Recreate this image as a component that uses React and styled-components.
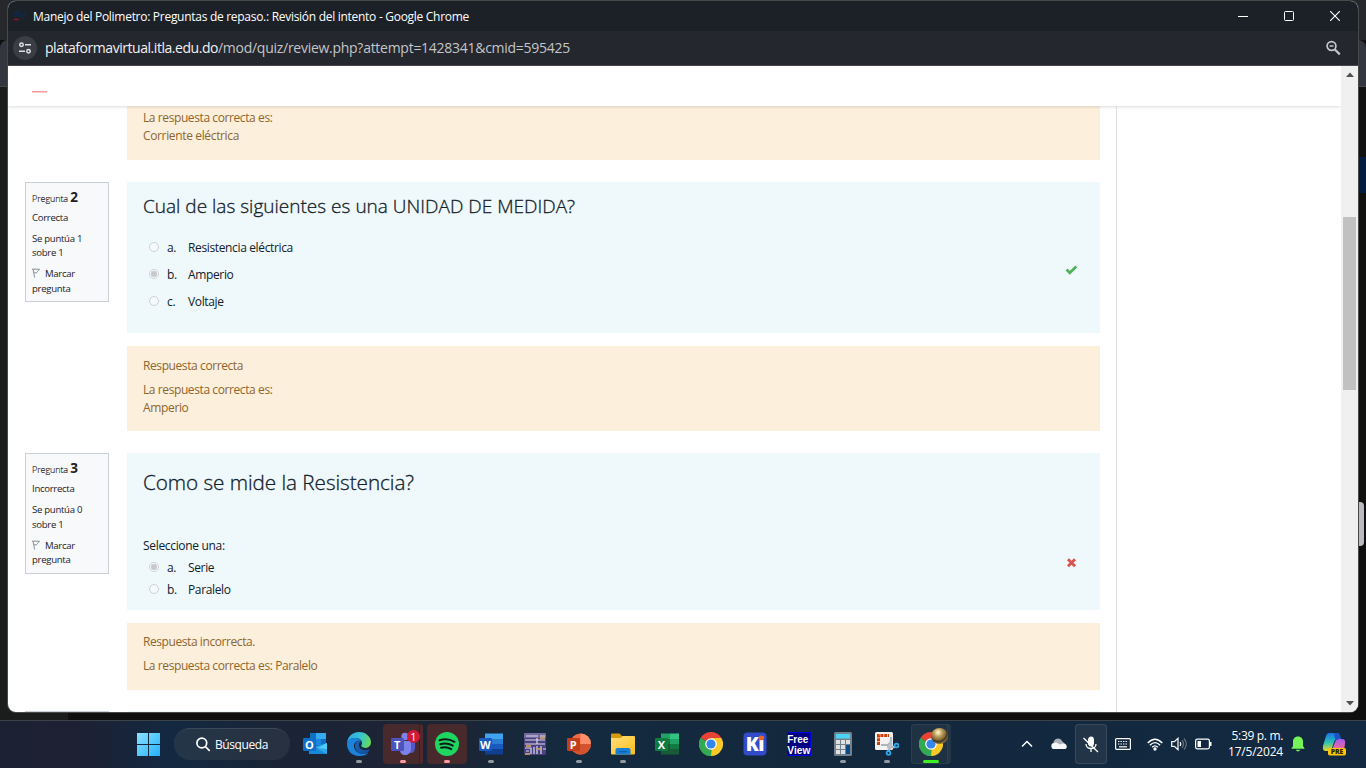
import React from "react";
import styled, { createGlobalStyle } from "styled-components";

const GlobalStyle = createGlobalStyle`
  * { box-sizing: border-box; }
  body {
    margin: 0;
    overflow: hidden;
    background: #0f0f0f;
    font-family: "Open Sans", "Noto Sans", sans-serif;
    font-size: 12px;
  }
`;

const Desktop = styled.div`
  position: relative;
  display: flex;
  flex-direction: column;
  width: 1366px;
  height: 768px;
  padding: 1px 8px 0;
  overflow: hidden;
  background: #0f0f0f;
`;

/* Slices of the maximised window that lies behind the popup */
const Backdrop = styled.div`
  position: absolute;
  inset: 0;
  display: flex;
  justify-content: space-between;
`;
const EdgeStrip = styled.div`
  display: flex;
  flex-direction: column;
  width: ${(p) => p.$width}px;
  height: 720px;
`;
const EdgePart = styled.div`
  height: ${(p) => p.$height}px;
  background: ${(p) => p.$color};
  border-radius: ${(p) => p.$radius || 0};
  border-bottom: ${(p) => (p.$line ? "1px solid #46484c" : "0")};
`;
const BackThumb = styled.div`
  width: 14px;
  height: 44px;
  border-radius: 4px;
  background: #b8babd;
`;

const Window = styled.div`
  position: relative;
  display: flex;
  flex-direction: column;
  width: 1350px;
  height: 711px;
  flex: none;
  border-radius: 8px;
  overflow: hidden;
  background: #fff;
  box-shadow: 0 0 0 1px #48494b;
`;
const TitleBar = styled.div`
  display: flex;
  align-items: center;
  height: 30px;
  flex: none;
  padding-left: 5px;
  background: #1c2127;
  color: #fff;
`;
const Title = styled.span`
  flex: 1;
  margin-left: 6px;
  letter-spacing: -0.286px;
`;
const WindowButton = styled.div`
  display: grid;
  place-items: center;
  width: 46px;
  height: 30px;
`;
const AddressBar = styled.div`
  display: flex;
  align-items: center;
  height: 35px;
  flex: none;
  padding: 0 17px 0 5px;
  background: #24272e;
  border-bottom: 1px solid #46484c;
`;
const SiteButton = styled.div`
  display: grid;
  place-items: center;
  width: 24px;
  height: 24px;
  border-radius: 50%;
  background: #3a3d44;
`;
const Url = styled.div`
  flex: 1;
  margin: -2px 0 0 8px;
  font-size: 14px;
  color: #c3c5c8;
  letter-spacing: -0.272px;
  white-space: nowrap;
`;
const Host = styled.span`
  color: #f2f2f2;
  letter-spacing: -0.457px;
`;

const Viewport = styled.div`
  display: flex;
  flex: 1;
  min-height: 0;
`;
const Page = styled.div`
  display: flex;
  flex-direction: column;
  width: 1333px;
  overflow: hidden;
`;
const NavBar = styled.header`
  position: relative;
  height: 40px;
  flex: none;
  padding: 25px 0 0 24px;
  background: #fff;
  box-shadow: 0 1px 3px rgba(0, 0, 0, 0.14);
`;
const LogoLine = styled.div`
  width: 15px;
  height: 2px;
  background: linear-gradient(#f19a9c 50%, #fbc9ca 50%);
`;
const Columns = styled.div`
  display: flex;
  flex: 1;
  min-height: 0;
`;
const Main = styled.main`
  width: 1109px;
  padding-left: 17px;
  border-right: 1px solid #dee2e6;
  overflow: hidden;
`;
const Question = styled.section`
  display: flex;
  align-items: flex-start;
  gap: 18px;
  margin-bottom: ${(p) => p.$gap || 22}px;
`;
const Info = styled.aside`
  width: 84px;
  height: ${(p) => p.$height}px;
  flex: none;
  padding: ${(p) => (p.$empty ? 0 : "6px 6px 0")};
  border: 1px solid #cad0d7;
  background: #f8f9fa;
  color: #1d2125;
  font-size: 9.6px;
  line-height: 14.5px;
  letter-spacing: -0.3px;
  white-space: nowrap;
`;
const InfoNumber = styled.div`
  height: 16px;
  line-height: 16px;
  font-size: 9px;
  font-weight: 300;
  letter-spacing: -0.1px;
  -webkit-text-stroke: 0.15px #1d2125;
  b { font-size: 13.5px; font-weight: 700; letter-spacing: 0; -webkit-text-stroke: 0; }
`;
const InfoText = styled.div`
  margin-top: ${(p) => p.$top ?? 6.5}px;
  svg { margin: 0 4px -1px 0; }
`;
const InfoGap = styled.div`
  width: 84px;
  flex: none;
`;
const Content = styled.div`
  width: 973px;
`;
const Formulation = styled.div`
  display: flex;
  height: ${(p) => p.$height}px;
  padding-left: 16px;
  background: #eff8fb;
  color: #11212a;
`;
const FormBody = styled.div`
  flex: 1;
  padding-top: ${(p) => p.$top}px;
`;
const Heading = styled.h4`
  margin: 0 0 ${(p) => p.$gap}px;
  font-size: ${(p) => p.$size}px;
  font-weight: 300;
  line-height: 26px;
  letter-spacing: ${(p) => p.$spacing}px;
  -webkit-text-stroke: 0.3px #11212a;
`;
const Prompt = styled.div`
  line-height: 18px;
  margin-bottom: 1px;
  letter-spacing: -0.32px;
`;
const Option = styled.div`
  display: flex;
  align-items: center;
  height: ${(p) => p.$height}px;
  padding-left: 6px;
  letter-spacing: -0.36px;
`;
const Radio = styled.span`
  display: grid;
  place-items: center;
  width: 10px;
  height: 10px;
  margin: -1px 8px 0 0;
  border: 1px solid #cfd2d3;
  border-radius: 50%;
  background: #f4f9fb;
  &::after {
    content: "";
    width: 6px;
    height: 6px;
    border-radius: 50%;
    background: ${(p) => (p.$checked ? "#c6c8c9" : "transparent")};
  }
`;
const Letter = styled.span`
  width: 21px;
`;
const Mark = styled.div`
  width: 13px;
  margin-right: 22px;
  padding-top: ${(p) => p.$top}px;
  svg { display: block; }
`;
const Feedback = styled.div`
  height: ${(p) => p.$height}px;
  margin-top: ${(p) => p.$gap ?? 13}px;
  padding: ${(p) => p.$top}px 16px 0;
  background: #fcefdc;
  color: #8e662e;
  letter-spacing: -0.405px;
  line-height: 18px;
`;
const FeedbackLine = styled.div`
  margin-top: ${(p) => p.$top || 0}px;
  letter-spacing: ${(p) => p.$spacing || -0.405}px;
`;

const ScrollBar = styled.div`
  display: flex;
  flex-direction: column;
  align-items: center;
  justify-content: space-between;
  width: 17px;
  padding: 6px 0 6px;
  background: #f0f0f0;
  svg { display: block; flex: none; }
`;
const ScrollTrack = styled.div`
  flex: 1;
  width: 13px;
  padding-top: 140px;
`;
const ScrollThumb = styled.div`
  height: 173px;
  background: #c1c1c1;
`;

const TaskBar = styled.footer`
  position: relative;
  display: flex;
  align-items: center;
  width: 1366px;
  height: 48px;
  flex: none;
  margin: 8px 0 0 -8px;
  padding: 0 0 1px 128px;
  border-top: 1px solid #3c4349;
  background: linear-gradient(90deg, #1b2132 0, #1d2033 75px, #132941 170px, #1b2436 290px, #1c2434 440px, #142a3e 560px, #13283d 860px, #122941 1366px);
  color: #fff;
`;
const Tile = styled.div`
  position: relative;
  display: grid;
  place-items: center;
  width: 40px;
  height: 40px;
  margin-right: 4px;
  border-radius: 4px;
  background: ${(p) => (p.$alert ? "#482a2d" : p.$active ? "#1f3244" : "transparent")};
  box-shadow: ${(p) => (p.$active ? "inset 0 0 0 1px #2c3e4d" : "none")};
  svg { display: block; }
`;
const TileStack = styled.div`
  position: absolute;
  left: 36px;
  top: 0;
  width: 4px;
  height: 40px;
  border-radius: 0 4px 4px 0;
  border-left: 1px solid ${(p) => (p.$alert ? "#2e2027" : "#304251")};
  background: ${(p) => (p.$alert ? "#55292c" : "#233747")};
`;
const Running = styled.i`
  position: absolute;
  bottom: 1px;
  left: ${(p) => (p.$wide ? 12 : 17)}px;
  width: ${(p) => (p.$wide ? 16 : 6)}px;
  height: 3px;
  border-radius: 2px;
  background: ${(p) => p.$color || "#9299a1"};
`;
const Badge = styled.span`
  position: absolute;
  left: 24px;
  top: 6px;
  width: 13px;
  height: 13px;
  border-radius: 50%;
  background: #d21a38;
  color: #fff;
  font-size: 11px;
  line-height: 13px;
  text-align: center;
`;
const Search = styled.div`
  display: flex;
  align-items: center;
  width: 116px;
  height: 32px;
  margin: 0 5px 0 2px;
  padding-left: 21px;
  border-radius: 16px;
  border-top: 1px solid #3b4857;
  background: linear-gradient(90deg, #233649, #28303f);
  span { margin-left: 5px; letter-spacing: -0.41px; }
`;
const Tray = styled.div`
  display: flex;
  align-items: center;
  margin: 0 11px 0 auto;
  height: 40px;
`;
const TrayItem = styled.div`
  display: grid;
  place-items: center;
  width: ${(p) => p.$width}px;
  height: 40px;
  border-radius: 4px;
  background: ${(p) => (p.$active ? "#223548" : "transparent")};
  box-shadow: ${(p) => (p.$active ? "inset 0 0 0 1px #37495a" : "none")};
`;
const Clock = styled.div`
  width: 63px;
  text-align: right;
  line-height: 16px;
  letter-spacing: -0.33px;
  white-space: nowrap;
  div + div { letter-spacing: -0.2px; }
`;

const Flag = () => (
  <svg width="9" height="10" viewBox="0 0 9 10" fill="none" stroke="#8b9095">
    <path d="M1 1L2.6 9.5M0 1.2h7.5L5.6 3.4 4.500 4.8H2" />
  </svg>
);

const OfficeTile = ({ letter, color }) => (
  <>
    <rect x="0" y="6" width="13" height="13" rx="1.2" fill={color} />
    <text x="6.3" y="16.5" textAnchor="middle" fontFamily="Open Sans" fontWeight="700" fontSize="11" fill="#fff">{letter}</text>
  </>
);
const Icon = ({ children }) => (
  <svg width="24" height="24" viewBox="0 0 24 24">{children}</svg>
);

const StartIcon = () => (
  <svg width="24" height="24" viewBox="0 0 24 24">
    <defs>
      <linearGradient id="start" x1="0" y1="0" x2="1" y2="1" gradientUnits="objectBoundingBox">
        <stop offset="0" stopColor="#8ce2ff" /><stop offset="1" stopColor="#22b1fb" />
      </linearGradient>
    </defs>
    <path fill="url(#start)" d="M1 1h11v11H1zM13 1h11v11h-11zM1 13h11v11H1zM13 13h11v11h-11z" />
  </svg>
);
const Outlook = () => (
  <Icon>
    <rect x="7" y="1" width="16" height="13" fill="#0f6fc5" />
    <rect x="13" y="1" width="10" height="6" fill="#36aaf0" />
    <rect x="13" y="7" width="5" height="6" fill="#1b86df" />
    <path d="M6 12l9 5 9-6v11H6z" fill="#1889d8" /><path d="M24 11v11L11 15z" fill="#2ea5e8" /><path d="M24 11v6l-9-1z" fill="#4fd0f7" />
    <OfficeTile letter="O" color="#0f6fc9" />
  </Icon>
);
const Edge = () => (
  <Icon>
    <defs>
      <linearGradient id="edgeTop" x1="0" y1=".3" x2="1" y2=".5"><stop offset="0" stopColor="#2fa9e4" /><stop offset=".55" stopColor="#37c5d0" /><stop offset="1" stopColor="#68d957" /></linearGradient>
      <linearGradient id="edgeLow" x1="0" y1="0" x2="1" y2="1"><stop offset="0" stopColor="#1b66b8" /><stop offset="1" stopColor="#104d99" /></linearGradient>
    </defs>
    <path d="M0 12C0 5 5 0 12 0s12 5 12 10c0 4-3 6-6 6-3 0-4-1-4-2 0-1 1-1 1-3 0-3-3-5-7-5-4 0-8 3-8 6z" fill="url(#edgeTop)" />
    <path d="M0 12c0-4 4-6 8-6 3 0 5 1 6 3-3-1-7 1-7 5 0 5 5 8 9 8 3 0 5-1 6-2-2 3-6 4-10 4C5 24 0 19 0 12z" fill="#1c83db" />
    <path d="M8 14c0-3 2-5 4-5 2 0 2 1 2 3s-1 2-1 3c0 2 3 3 6 3 2 0 4-1 4-1-1 3-4 5-8 5-4 0-7-4-7-8z" fill="url(#edgeLow)" />
    <path d="M12 11c2-1 3 0 2 2 0 2 2 3 5 3l4-.5-.5 1.500c-5 2-10.500.5-10.500-3.500z" fill="#172a3c" />
  </Icon>
);
const Teams = () => (
  <Icon>
    <circle cx="21" cy="7" r="2.500" fill="#5059c9" /><circle cx="14" cy="4.500" r="3.700" fill="#7b83eb" />
    <path d="M17 9h7v7c0 3-2 5-4 5s-3-2-3-4z" fill="#5059c9" />
    <path d="M9 9h11v8c0 4-3 6-6 6s-5-2-5-5z" fill="#7b83eb" />
    <OfficeTile letter="T" color="#4b53bc" />
  </Icon>
);
const Spotify = () => (
  <Icon>
    <circle cx="12" cy="12" r="12" fill="#1ed760" />
    <path d="M4.500 8.300c5-1.600 10.500-1 15 1.500M5.300 12.200c4.500-1.300 8.500-.8 12.500 1.400M6 15.800c3.500-1 7-.6 10.300 1.300" fill="none" stroke="#111b17" strokeWidth="2" strokeLinecap="round" />
  </Icon>
);
const Word = () => (
  <Icon>
    <path d="M6 1.500h18v5.500H6z" fill="#41a5ee" /><path d="M6 7h18v5H6z" fill="#2b7cd3" />
    <path d="M6 12h18v5H6z" fill="#185abd" /><path d="M6 17h18v5.500H6z" fill="#103f91" />
    <OfficeTile letter="W" color="#185abd" />
  </Icon>
);
const Circuit = () => (
  <Icon>
    <rect x="1" y="1" width="22" height="22" rx="2" fill="#4a4181" />
    <path d="M1 1h22v5H1z" fill="#837aa9" opacity=".7" />
    <path d="M3 4h12M17 4h5M2 8h13M2 12h12M14 8h8M14 6v6h8M2 16h6v6M11 15v7M14 14v8M18 14v8M20 17h3M3 19h3" stroke="#dedbed" strokeWidth="1.200" fill="none" />
    <path d="M17 6h5M3 14h5M2 22h5M15 17h4" stroke="#e3a75e" strokeWidth="1.400" />
  </Icon>
);
const PowerPoint = () => (
  <Icon>
    <circle cx="13.500" cy="12" r="10.500" fill="#ed6c47" /><path d="M13.500 1.500A10.500 10.500 0 0124 12H13.500z" fill="#ff8f6b" />
    <path d="M3 12h21a10.500 10.500 0 01-21 0z" fill="#d35230" />
    <OfficeTile letter="P" color="#c43e1c" />
  </Icon>
);
const Folder = () => (
  <Icon>
    <defs><linearGradient id="folder" x1="0" y1="0" x2="1" y2="1"><stop offset="0" stopColor="#ffe07a" /><stop offset="1" stopColor="#fcbc1c" /></linearGradient></defs>
    <path d="M0 2.500Q0 1.500 1 1.500h7.500L11 4h12v5H0z" fill="#d99a0b" />
    <path d="M0 6h9.500L12 4h11q1 0 1 1v16.500q0 1-1 1H1q-1 0-1-1z" fill="url(#folder)" />
    <path d="M4.500 22.500V18q0-2 2-2h11q2 0 2 2v4.500z" fill="#1680d8" /><path d="M8 19.700h8" stroke="#0d5ba7" strokeWidth="1.200" />
  </Icon>
);
const Excel = () => (
  <Icon>
    <path d="M6 1.500h9v5.500H6z" fill="#21a366" /><path d="M15 1.500h9v5.500h-9z" fill="#33c481" />
    <path d="M6 7h9v5H6z" fill="#107c41" /><path d="M15 7h9v5h-9z" fill="#21a366" />
    <path d="M6 12h18v10.500H6z" fill="#185c37" /><path d="M15 12h9v5h-9z" fill="#107c41" />
    <OfficeTile letter="X" color="#107c41" />
  </Icon>
);
const Chrome = () => (
  <Icon>
    <path d="M12 12L1.600 6A12 12 0 0122.400 6z" fill="#ea4335" />
    <path d="M12 12L22.400 6A12 12 0 0112 24z" fill="#fbc926" />
    <path d="M12 12v12A12 12 0 011.600 6z" fill="#34a853" />
    <path d="M12 6h10.400L17.200 15 12 24 15 13z" fill="#fbc926" />
    <path d="M1.600 6L7 15l3 2 3-2-1 9A12 12 0 011.600 6z" fill="#34a853" />
    <circle cx="12" cy="12" r="5.800" fill="#fff" /><circle cx="12" cy="12" r="4.600" fill="#3485ec" />
  </Icon>
);
const KiCad = () => (
  <Icon>
    <rect x=".5" y=".5" width="23" height="23" rx="4" fill="#314bcb" />
    <text x="2.800" y="19.300" fontFamily="Open Sans" fontWeight="800" fontSize="19" letterSpacing="-.6" fill="#fff">Ki</text>
    <circle cx="18" cy="6" r="2.400" fill="#f2641c" />
  </Icon>
);
const FreeView = () => (
  <Icon>
    <rect width="24" height="24" fill="#000080" stroke="#0000e8" strokeWidth="2" />
    <text x=".3" y="10.500" textLength="21" lengthAdjust="spacingAndGlyphs" fontFamily="Liberation Sans" fontWeight="700" fontSize="11" fill="#fff">Free</text>
    <text x=".3" y="22" textLength="23" lengthAdjust="spacingAndGlyphs" fontFamily="Liberation Sans" fontWeight="700" fontSize="11" fill="#fff">View</text>
  </Icon>
);
const Calculator = () => (
  <Icon>
    <rect x="3" y="0" width="18" height="24" rx="1.500" fill="#74808a" /><rect x="5" y="2" width="14" height="4.500" fill="#49d4f8" />
    <path d="M5 8h4v4H5zM10 8h4v4h-4zM15 8h4v4h-4zM5 13h4v4H5zM10 13h4v4h-4zM5 18h4v4H5zM10 18h4v4h-4z" fill="#dce0e3" />
    <rect x="15" y="13" width="4" height="9" fill="#0b4a85" />
  </Icon>
);
const Snip = () => (
  <Icon>
    <rect x="0" y="0" width="18" height="18" rx="1.500" fill="#f3f3f3" />
    <path d="M3.500 13V3.500H14" fill="none" stroke="#d83b01" strokeWidth="3" strokeDasharray="3 .8" />
    <path d="M6 13h7l3-3V5" fill="none" stroke="#aeb4ba" strokeWidth="2" />
    <path d="M16 7v8l-3 4M12 15h8" fill="none" stroke="#b6bec4" strokeWidth="2.500" />
    <g fill="#14283c" stroke="#2da8ea" strokeWidth="1.800"><circle cx="21.500" cy="13.500" r="1.900" /><circle cx="13.500" cy="21" r="1.900" /></g>
  </Icon>
);
const Avatar = styled.span`
  position: absolute;
  left: 20px;
  top: 4px;
  width: 17px;
  height: 16px;
  border-radius: 50%;
  background: radial-gradient(circle at 42% 28%, #f3e6b5 0 8%, #c2a660 25%, #806234 52%, #40371f 58%, #95773f 78%, #5a4622);
`;
const Copilot = () => (
  <svg width="24" height="24" viewBox="0 0 24 24">
    <defs>
      <linearGradient id="copLeft" x1="0" y1="0" x2="0" y2="1"><stop offset="0" stopColor="#1d72e7" /><stop offset=".5" stopColor="#26bfbb" /><stop offset="1" stopColor="#e5d92c" /></linearGradient>
      <linearGradient id="copRight" x1="0" y1="0" x2="0" y2="1"><stop offset="0" stopColor="#a45bed" /><stop offset="1" stopColor="#f76d91" /></linearGradient>
    </defs>
    <path d="M7 1h8q2 0 2.600 2L19 7h-4q-2 0-3 3l-2 6q-1 3-3 3H4q-4 0-3-5L4 4q1-3 3-3z" fill="url(#copLeft)" />
    <path d="M12 1h3q2 0 2.600 2L19 7h-6z" fill="#1853c7" />
    <path d="M17 7h3q4 0 3 5l-1 6H10l3-8q1-3 4-3z" fill="url(#copRight)" />
    <rect x="6" y="16" width="18" height="7.500" rx="1.800" fill="#fdc60a" />
    <text x="15" y="22.200" textAnchor="middle" fontFamily="Open Sans" fontWeight="800" fontSize="6.800" fill="#2b2300">PRE</text>
  </svg>
);

const TASKS = [
  { icon: Outlook },
  { icon: Edge, running: true },
  { icon: Teams, running: true, alert: true, stacked: true, badge: "1" },
  { icon: Spotify, running: true, alert: true },
  { icon: Word, running: true },
  { icon: Circuit },
  { icon: PowerPoint, running: true },
  { icon: Folder, running: true },
  { icon: Excel },
  { icon: Chrome },
  { icon: KiCad },
  { icon: FreeView },
  { icon: Calculator, running: true },
  { icon: Snip, running: true },
  { icon: Chrome, running: true, active: true, stacked: true, avatar: true },
];

const Task = ({ icon: Glyph, running, alert, active, stacked, badge, avatar }) => (
  <Tile $alert={alert} $active={active}>
    {stacked && <TileStack $alert={alert} />}
    <Glyph />
    {avatar && <Avatar />}
    {badge && <Badge>{badge}</Badge>}
    {running && <Running $wide={active} $color={active ? "#3df01f" : alert ? "#ff99a0" : undefined} />}
  </Tile>
);

const QuestionInfo = ({ number, state, grade, height, stateTop }) => (
  <Info $height={height}>
    <InfoNumber>Pregunta <b>{number}</b></InfoNumber>
    <InfoText $top={stateTop}>{state}</InfoText>
    <InfoText>{grade}<br />sobre 1</InfoText>
    <InfoText><Flag />Marcar<br />pregunta</InfoText>
  </Info>
);

const Answer = ({ letter, checked, height, children }) => (
  <Option $height={height}>
    <Radio $checked={checked} />
    <Letter>{letter}.</Letter>
    <span>{children}</span>
  </Option>
);

export default function App() {
  return (
    <Desktop>
      <GlobalStyle />
      <Backdrop>
        <EdgeStrip $width={68}>
          <EdgePart $height={40} $color="#26282c" />
          <EdgePart $height={47} $color="#33363e" $radius="8px 0 0 0" $line />
          <EdgePart $height={633} $color="#1b1c1c" />
        </EdgeStrip>
        <EdgeStrip $width={16}>
          <EdgePart $height={40} $color="#26282c" />
          <EdgePart $height={47} $color="#33363e" $radius="0 8px 0 0" $line />
          <EdgePart $height={70} $color="#111" />
          <EdgePart $height={36} $color="#031c40" />
          <EdgePart $height={309} $color="#111210" />
          <BackThumb />
        </EdgeStrip>
      </Backdrop>

      <Window>
        <TitleBar>
          <svg width="14" height="14" viewBox="0 0 14 14" fill="none">
            <path d="M2 8V4l2-1v4m0-3l2-1v5M8 3v4h3m1-5l-1 6-2 3" stroke="#10294a" strokeWidth="1.300" />
            <path d="M1 10.500h5" stroke="#7c1d2a" strokeWidth="1.400" />
          </svg>
          <Title>Manejo del Polimetro: Preguntas de repaso.: Revisión del intento - Google Chrome</Title>
          <WindowButton><svg width="10" height="10"><path d="M0 5.500h10" stroke="#fff" /></svg></WindowButton>
          <WindowButton><svg width="10" height="10"><rect x=".5" y=".5" width="9" height="9" rx="1" fill="none" stroke="#fff" /></svg></WindowButton>
          <WindowButton><svg width="10" height="10"><path d="M0 0l10 10M10 0L0 10" stroke="#fff" strokeWidth="1.100" /></svg></WindowButton>
        </TitleBar>
        <AddressBar>
          <SiteButton>
            <svg width="12" height="12" viewBox="0 0 12 12" fill="none" stroke="#dfe0e2" strokeWidth="1.500">
              <circle cx="2.500" cy="2.700" r="1.700" /><path d="M6 2.700h6M0 9.300h6" /><circle cx="9.500" cy="9.300" r="1.700" />
            </svg>
          </SiteButton>
          <Url><Host>plataformavirtual.itla.edu.do</Host>/mod/quiz/review.php?attempt=1428341&amp;cmid=595425</Url>
          <svg width="16" height="16" viewBox="0 0 16 16" fill="none" stroke="#c4c5c8">
            <circle cx="6.500" cy="6" r="4.400" strokeWidth="1.700" /><path d="M9.600 9.200l5.200 5.200" strokeWidth="2.200" /><path d="M4.500 6h4" strokeWidth="1.500" />
          </svg>
        </AddressBar>

        <Viewport>
          <Page>
            <NavBar><LogoLine /></NavBar>
            <Columns>
              <Main>
                <Question>
                  <InfoGap />
                  <Content>
                    <Feedback $height={54} $gap={0} $top={3}>
                      <FeedbackLine>La respuesta correcta es:</FeedbackLine>
                      <FeedbackLine $spacing={-0.354}>Corriente eléctrica</FeedbackLine>
                    </Feedback>
                  </Content>
                </Question>

                <Question>
                  <QuestionInfo number="2" state="Correcta" grade="Se puntúa 1" height={120} stateTop={5.8} />
                  <Content>
                    <Formulation $height={151}>
                      <FormBody $top={11}>
                        <Heading $size={19} $spacing={0.01} $gap={15}>Cual de las siguientes es una UNIDAD DE MEDIDA?</Heading>
                        <Answer letter="a" height={27}>Resistencia eléctrica</Answer>
                        <Answer letter="b" height={27} checked>Amperio</Answer>
                        <Answer letter="c" height={27}>Voltaje</Answer>
                      </FormBody>
                      <Mark $top={83}>
                        <svg width="13" height="10" viewBox="0 0 13 10"><path d="M1.500 4.500l3.300 3.300L11.300 1.500" fill="none" stroke="#4fb35a" strokeWidth="2.700" /></svg>
                      </Mark>
                    </Formulation>
                    <Feedback $height={85} $top={11}>
                      <FeedbackLine>Respuesta correcta</FeedbackLine>
                      <FeedbackLine $top={6}>La respuesta correcta es:</FeedbackLine>
                      <FeedbackLine $spacing={-0.35}>Amperio</FeedbackLine>
                    </Feedback>
                  </Content>
                </Question>

                <Question $gap={21}>
                  <QuestionInfo number="3" state="Incorrecta" grade="Se puntúa 0" height={121} stateTop={6} />
                  <Content>
                    <Formulation $height={157}>
                      <FormBody $top={16}>
                        <Heading $size={20.7} $spacing={-0.05} $gap={42}>Como se mide la Resistencia?</Heading>
                        <Prompt>Seleccione una:</Prompt>
                        <Answer letter="a" height={22} checked>Serie</Answer>
                        <Answer letter="b" height={22}>Paralelo</Answer>
                      </FormBody>
                      <Mark $top={105}>
                        <svg width="13" height="10" viewBox="0 0 13 10"><path d="M3 1.200l7 7M10 1.200l-7 7" stroke="#dc5450" strokeWidth="2.900" /></svg>
                      </Mark>
                    </Formulation>
                    <Feedback $height={67} $top={10}>
                      <FeedbackLine $spacing={-0.421}>Respuesta incorrecta.</FeedbackLine>
                      <FeedbackLine $top={6}>La respuesta correcta es: Paralelo</FeedbackLine>
                    </Feedback>
                  </Content>
                </Question>

                <Question>
                  <Info $height={121} $empty />
                  <Content><Formulation $height={100} /></Content>
                </Question>
              </Main>
            </Columns>
          </Page>
          <ScrollBar>
            <svg width="8" height="5"><path d="M4 0.500L8 5H0z" fill="#505050" /></svg>
            <ScrollTrack><ScrollThumb /></ScrollTrack>
            <svg width="8" height="5"><path d="M4 4.500L0 0h8z" fill="#505050" /></svg>
          </ScrollBar>
        </Viewport>
      </Window>

      <TaskBar>
        <Tile><StartIcon /></Tile>
        <Search>
          <svg width="15" height="15" viewBox="0 0 15 15" fill="none" stroke="#fff" strokeWidth="1.700"><circle cx="6.800" cy="6" r="4.900" /><path d="M10.300 9.500l4.400 4.500" /></svg>
          <span>Búsqueda</span>
        </Search>
        {TASKS.map((task, i) => <Task key={i} {...task} />)}
        <Tray>
          <TrayItem $width={32}><svg width="12" height="8" viewBox="0 0 12 8"><path d="M1 6.500l5-5 5 5" fill="none" stroke="#fff" strokeWidth="1.500" /></svg></TrayItem>
          <TrayItem $width={32}>
            <svg width="16" height="12" viewBox="0 0 16 12"><path d="M3 7a4.200 4.200 0 018-4l3 3-6 5H3z" fill="#a9b0b8" /><path d="M3.500 11a3 3 0 01-.3-6c1-.6 2-.5 3 0l3 1.500c4-2.500 6.800 0 6.600 2.500-.2 1.500-1.200 2-2.500 2z" fill="#f5f6f7" /></svg>
          </TrayItem>
          <TrayItem $width={32} $active>
            <svg width="16" height="17" viewBox="0 0 16 17" fill="none" stroke="#fff" strokeWidth="1.300"><rect x="5.700" y="1.200" width="4.600" height="8.600" rx="2.300" fill="#fff" /><path d="M3 8c0 6 10 6 10 0M8 12.500v3.500" /><path d="M.5 2L15 16" /></svg>
          </TrayItem>
          <TrayItem $width={32}>
            <svg width="16" height="12" viewBox="0 0 16 12" fill="none" stroke="#fff" strokeWidth="1.200"><rect x=".6" y=".6" width="14.800" height="10.800" rx="1" /><path d="M3 3.500h10M3 6h10" strokeDasharray="1.400 1.100" /><path d="M4 8.800h8" /></svg>
          </TrayItem>
          <TrayItem $width={32}>
            <svg width="16" height="13" viewBox="0 0 16 13" fill="none" stroke="#fff" strokeWidth="1.300"><path d="M.7 5Q8-2.500 15.300 5M2.900 7.200Q8 2 13.100 7.200M5.100 9.300Q8 6.500 10.900 9.300" /><circle cx="8" cy="11" r="1" fill="#fff" /></svg>
          </TrayItem>
          <TrayItem $width={16}>
            <svg width="16" height="14" viewBox="0 0 16 14" fill="none" stroke="#fff" strokeWidth="1.200"><path d="M.7 4.700h2.600L7 1.300v11.400L3.300 9.300H.7zM9 5q1.500 2 0 4" /><path d="M11 3.200q3 3.800 0 7.600M13 1.500q4.500 5.500 0 11" stroke="#66727f" /></svg>
          </TrayItem>
          <TrayItem $width={33}>
            <svg width="17" height="12" viewBox="0 0 17 12"><rect x=".6" y="1.100" width="13.800" height="9.800" rx="1.800" fill="none" stroke="#fff" strokeWidth="1.200" /><path d="M2.500 3h3.500v6H2.500zM15 4h1.500v4H15z" fill="#fff" /></svg>
          </TrayItem>
          <Clock><div>5:39 p. m.</div><div>17/5/2024</div></Clock>
          <TrayItem $width={30}>
            <svg width="14" height="16" viewBox="0 0 14 16"><path d="M7 .5c3 0 5 2.200 5 5V10l1.700 2.800H.3L2 10V5.500c0-2.800 2-5 5-5zM4.800 13.700h4.400Q8.500 15.500 7 15.500t-2.200-1.800z" fill="#76f558" /></svg>
          </TrayItem>
          <TrayItem $width={42}><Copilot /></TrayItem>
        </Tray>
      </TaskBar>
    </Desktop>
  );
}
